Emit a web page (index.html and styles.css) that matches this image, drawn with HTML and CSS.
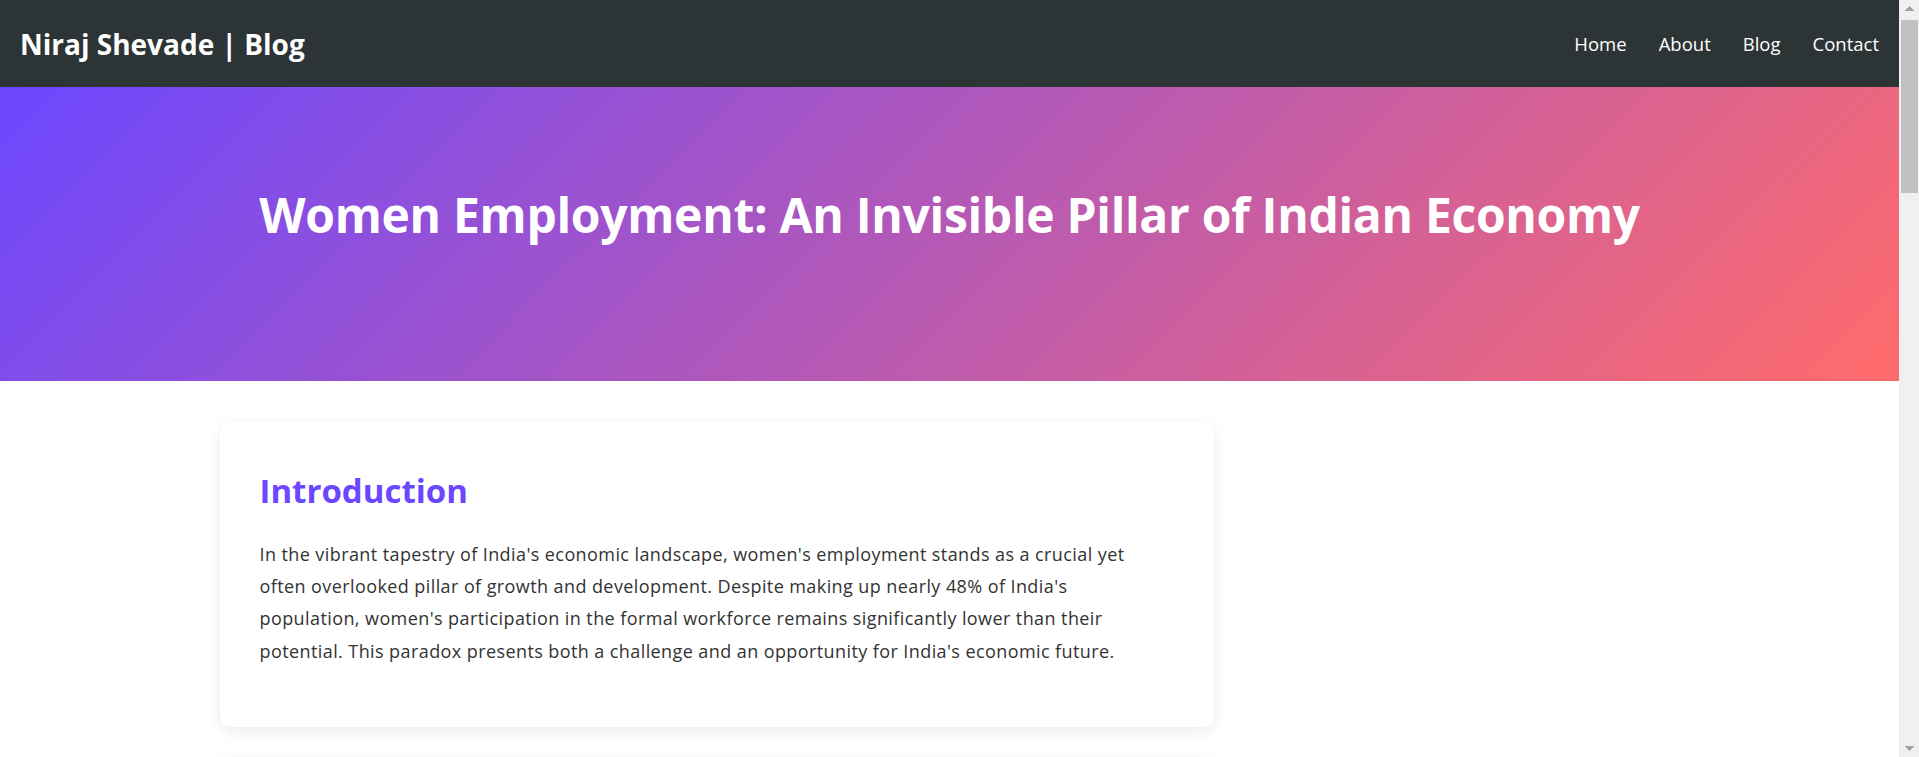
FILE: index.html
```html
<!DOCTYPE html>
<html lang="en">
<head>
<meta charset="utf-8">
<title>Women Employment: An Invisible Pillar of Indian Economy | Niraj Shevade</title>
<link rel="stylesheet" href="styles.css">
</head>
<body>
<div class="page">
  <header class="site-header">
    <a class="logo" href="#">Niraj Shevade | Blog</a>
    <nav class="main-nav">
      <a href="#">Home</a>
      <a href="#">About</a>
      <a href="#">Blog</a>
      <a href="#">Contact</a>
    </nav>
  </header>

  <section class="hero">
    <h1 class="hero-title">Women Employment: An Invisible Pillar of Indian Economy</h1>
  </section>

  <main class="container">
    <div class="content">
      <article class="card">
        <h2 class="card-title">Introduction</h2>
        <p class="card-text">In the vibrant tapestry of India's economic landscape, women's employment stands as a crucial yet often overlooked pillar of growth and development. Despite making up nearly 48% of India's population, women's participation in the formal workforce remains significantly lower than their potential. This paradox presents both a challenge and an opportunity for India's economic future.</p>
      </article>
      <article class="card">
        <h2 class="card-title">The Current Landscape</h2>
        <p class="card-text">India's female labour force participation rate has remained among the lowest in the world for decades, even as the economy has grown rapidly. A large share of the work women do is informal, unpaid or unrecorded, which keeps their contribution hidden from official statistics.</p>
      </article>
      <article class="card">
        <h2 class="card-title">Barriers to Participation</h2>
        <p class="card-text">Social norms, safety concerns, the burden of unpaid care work and a shortage of suitable jobs close to home all keep women out of the formal workforce. Access to skills, credit and digital tools remains uneven across regions.</p>
      </article>
      <article class="card">
        <h2 class="card-title">The Economic Opportunity</h2>
        <p class="card-text">Closing the gender gap in employment could add a significant share to India's GDP. Investments in childcare, transport, skilling and flexible work arrangements can unlock this potential and strengthen households and communities alike.</p>
      </article>
      <article class="card">
        <h2 class="card-title">Conclusion</h2>
        <p class="card-text">Women are already an invisible pillar of the Indian economy. Recognising, measuring and supporting their work is not only a matter of fairness but a foundation for sustainable growth.</p>
      </article>
    </div>
  </main>
</div>

<div class="scrollbar" aria-hidden="true">
  <span class="sb-button sb-up"></span>
  <span class="sb-track"><span class="sb-thumb"></span></span>
  <span class="sb-button sb-down"></span>
</div>
</body>
</html>
```

FILE: styles.css
```css
body {
  display: flex;
  align-items: flex-start;
  margin: 0;
  background: #ffffff;
  color: #333333;
  font-family: "Open Sans", "Noto Sans", "Liberation Sans", sans-serif;
}

.page {
  flex: 1 1 auto;
  min-width: 0;
}

/* browser-style vertical scrollbar */
.scrollbar {
  position: sticky;
  top: 0;
  flex: 0 0 20px;
  display: flex;
  flex-direction: column;
  height: 100vh;
  background: #f0f0f0;
}

.sb-button {
  flex: 0 0 17px;
  background-repeat: no-repeat;
  background-position: center;
  background-size: 9px 5px;
}

.sb-up {
  background-image: conic-gradient(from 135deg at 50% 0, #a3a3a3 0deg 90deg, transparent 90deg);
}

.sb-down {
  background-image: conic-gradient(from -45deg at 50% 100%, #a3a3a3 0deg 90deg, transparent 90deg);
}

.sb-track {
  flex: 1 1 auto;
  display: flex;
  flex-direction: column;
  padding: 3px 1px 0 2px;
}

.sb-thumb {
  height: 173px;
  background: #c1c1c1;
}

.site-header {
  display: flex;
  align-items: center;
  justify-content: space-between;
  height: 87px;
  padding: 0 20px;
  background: #2d3436;
}

.logo {
  color: #ffffff;
  text-decoration: none;
  font-size: 28px;
  font-weight: 700;
}

.main-nav {
  display: flex;
  gap: 32px;
}

.main-nav a {
  color: #ffffff;
  text-decoration: none;
  font-size: 18.5px;
}

.hero {
  box-sizing: border-box;
  height: 294px;
  padding: 99px 20px 0;
  background: linear-gradient(135deg, #6c47ff 0%, #ff6b6b 100%);
  color: #ffffff;
}

.hero-title {
  margin: 0;
  text-align: center;
  font-size: 48px;
  font-weight: 700;
  line-height: 1.2;
  letter-spacing: -0.3px;
}

.container {
  max-width: 1460px;
  margin: 0 auto;
  padding: 41px 20px 400px;
}

.content {
  max-width: 994px;
}

.card {
  background: #ffffff;
  border-radius: 12px;
  box-shadow: 0 4px 15px rgba(0, 0, 0, 0.08);
  padding: 40px;
  margin-bottom: 30px;
}

.card-title {
  margin: 9px 0 27px;
  color: #6c47ff;
  font-size: 33px;
  font-weight: 700;
  line-height: 1.2;
}

.card-text {
  max-width: 890px;
  margin: 0 0 20px;
  font-size: 18px;
  line-height: 32.4px;
  letter-spacing: 0.41px;
}
```
